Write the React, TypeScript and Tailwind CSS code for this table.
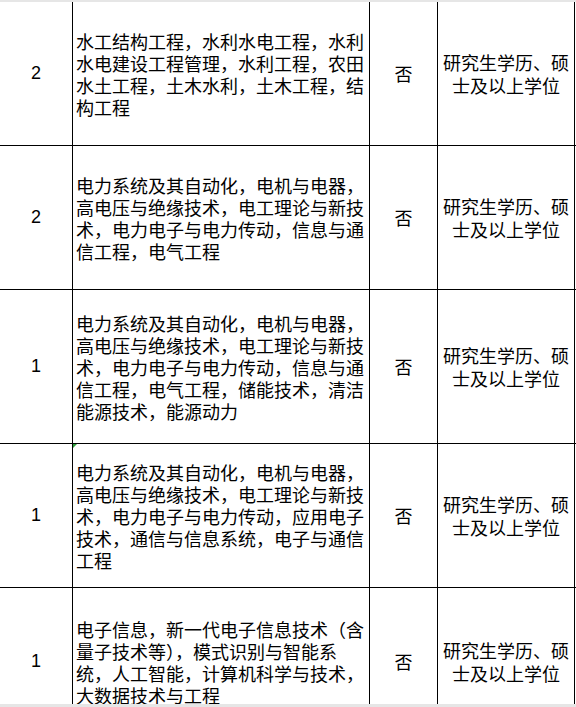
const CJK = '"Noto Sans CJK SC", "Noto Sans", sans-serif';

interface RowItem {
  count: string;
  majors: string[];
  height: string;
  mark?: boolean;
}

const ROWS: RowItem[] = [
  {
    count: '2',
    height: 'h-[144px]',
    majors: [
      '水工结构工程，水利水电工程，水利',
      '水电建设工程管理，水利工程，农田',
      '水土工程，土木水利，土木工程，结',
      '构工程',
    ],
  },
  {
    count: '2',
    height: 'h-[144px]',
    majors: [
      '电力系统及其自动化，电机与电器，',
      '高电压与绝缘技术，电工理论与新技',
      '术，电力电子与电力传动，信息与通',
      '信工程，电气工程',
    ],
  },
  {
    count: '1',
    height: 'h-[154px]',
    majors: [
      '电力系统及其自动化，电机与电器，',
      '高电压与绝缘技术，电工理论与新技',
      '术，电力电子与电力传动，信息与通',
      '信工程，电气工程，储能技术，清洁',
      '能源技术，能源动力',
    ],
  },
  {
    count: '1',
    height: 'h-[144px]',
    mark: true,
    majors: [
      '电力系统及其自动化，电机与电器，',
      '高电压与绝缘技术，电工理论与新技',
      '术，电力电子与电力传动，应用电子',
      '技术，通信与信息系统，电子与通信',
      '工程',
    ],
  },
  {
    count: '1',
    height: 'h-[148px]',
    majors: [
      '电子信息，新一代电子信息技术（含',
      '量子技术等），模式识别与智能系',
      '统，人工智能，计算机科学与技术，',
      '大数据技术与工程',
    ],
  },
];

export default function App() {
  return (
    <div className="flex h-[707px] w-[576px] flex-col overflow-hidden bg-white text-black">
      <div className="h-[2px] shrink-0 bg-[#e6e6e6]" />
      <div className="flex-1 overflow-hidden">
        {ROWS.map((row, i) => (
          <div
            key={i}
            className={`grid ${row.height} grid-cols-[73px_297px_68px_137px] border-b border-black`}
          >
            <div
              className="flex items-center justify-center border-r border-black text-[18px]"
              style={{ fontFamily: '"Liberation Sans", Arial, sans-serif' }}
            >
              {row.count}
            </div>
            <div
              className="relative flex flex-col justify-center border-r border-black pl-[3px] text-[18px] leading-[22px]"
              style={{ fontFamily: CJK }}
            >
              {row.mark && (
                <span className="absolute left-0 top-0 h-0 w-0 border-r-[4px] border-t-[4px] border-r-transparent border-t-[#2e9e3a]" />
              )}
              {row.majors.map((line) => (
                <span key={line} className="block whitespace-nowrap">
                  {line}
                </span>
              ))}
            </div>
            <div
              className="flex items-center justify-center border-r border-black text-[18px]"
              style={{ fontFamily: CJK }}
            >
              否
            </div>
            <div
              className="flex flex-col items-center justify-center border-r border-black text-[18px] leading-[23px]"
              style={{ fontFamily: CJK }}
            >
              <span className="whitespace-nowrap">研究生学历、硕</span>
              <span className="whitespace-nowrap">士及以上学位</span>
            </div>
          </div>
        ))}
      </div>
      <div className="h-[3px] shrink-0 bg-[#e6e6e6]" />
    </div>
  );
}
